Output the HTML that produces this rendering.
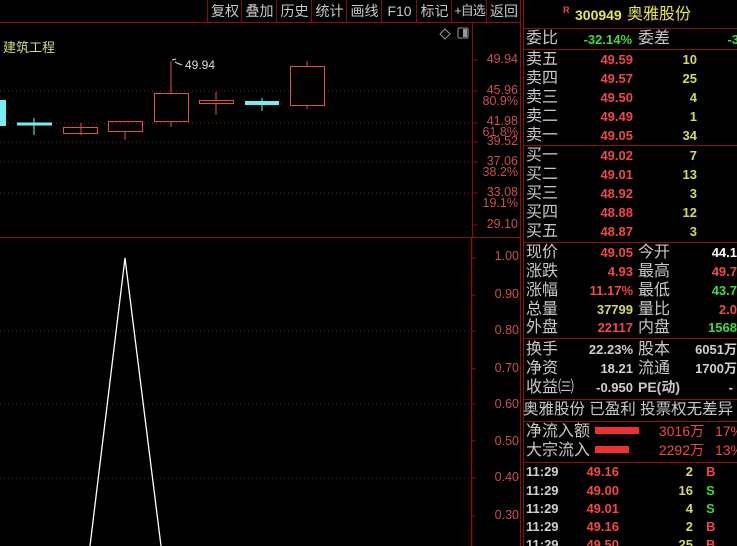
<!DOCTYPE html><html><head><meta charset="utf-8"><style>
body{margin:0;width:737px;height:546px;background:#000;overflow:hidden;position:relative;font-family:"Liberation Sans","Noto Sans CJK SC",sans-serif}
.a{position:absolute;white-space:nowrap}
.tb{position:absolute;top:0;height:22px;line-height:22px;font-size:14px;color:#c8c8c8;text-align:center;border-left:1px solid #7a1010;white-space:nowrap;overflow:hidden}
.ax{position:absolute;font-size:12.5px;color:#c85050;text-align:right}
.rp{position:absolute;left:523px;width:214px;font-size:16px;color:#c8c8c8;overflow:hidden}
.r{position:absolute;height:19px;line-height:19px;left:0;width:214px}
.r span{position:absolute;white-space:nowrap}
.n{font-weight:bold;font-size:13px;text-align:right}
.red{color:#f04848}.yel{color:#d8d860}.grn{color:#40d840}.wht{color:#fff}.gry{color:#d0d0d0}
.hl{position:absolute;left:0;width:214px;height:1px;background:#8a1010}
</style></head><body>
<div class="tb" style="left:207px;width:34px">复权</div>
<div class="tb" style="left:241px;width:35px">叠加</div>
<div class="tb" style="left:276px;width:35px">历史</div>
<div class="tb" style="left:311px;width:35px">统计</div>
<div class="tb" style="left:346px;width:35px">画线</div>
<div class="tb" style="left:381px;width:35px">F10</div>
<div class="tb" style="left:416px;width:35px">标记</div>
<div class="tb" style="left:451px;width:35px;font-size:13px;letter-spacing:-1px">+自选</div>
<div class="tb" style="left:486px;width:34px">返回</div>
<div class="a" style="left:0;top:22px;width:522px;height:1px;background:#8a1010"></div>
<div class="a" style="left:3px;top:37px;font-size:13px;color:#d8d890">建筑工程</div>
<svg class="a" style="left:0;top:0" width="522" height="546">
<g stroke="#6a2020" stroke-dasharray="1 3">
<line x1="0" y1="91" x2="472" y2="91"/><line x1="0" y1="123" x2="472" y2="123"/><line x1="0" y1="142" x2="472" y2="142"/><line x1="0" y1="162" x2="472" y2="162"/><line x1="0" y1="193" x2="472" y2="193"/>
<line x1="0" y1="331" x2="472" y2="331"/><line x1="0" y1="404" x2="472" y2="404"/><line x1="0" y1="478" x2="472" y2="478"/></g>
<line x1="472.5" y1="23" x2="472.5" y2="237" stroke="#8a1010"/>
<line x1="471.5" y1="238" x2="471.5" y2="546" stroke="#8a1010" stroke-width="1.5"/>
<line x1="0" y1="237.5" x2="522" y2="237.5" stroke="#8a1010"/>
<g stroke="#8a1010"><line x1="472" y1="60" x2="478" y2="60"/><line x1="472" y1="91" x2="478" y2="91"/><line x1="472" y1="123" x2="478" y2="123"/><line x1="472" y1="142" x2="478" y2="142"/><line x1="472" y1="162" x2="478" y2="162"/><line x1="472" y1="193" x2="478" y2="193"/><line x1="472" y1="225" x2="478" y2="225"/>
<line x1="471" y1="258" x2="476" y2="258"/><line x1="471" y1="295" x2="476" y2="295"/><line x1="471" y1="331" x2="476" y2="331"/><line x1="471" y1="369" x2="476" y2="369"/><line x1="471" y1="404" x2="476" y2="404"/><line x1="471" y1="441" x2="476" y2="441"/><line x1="471" y1="478" x2="476" y2="478"/><line x1="471" y1="516" x2="476" y2="516"/></g>
<path d="M440 34 L445 29 L450 34 L445 39Z" fill="none" stroke="#999"/>
<rect x="458" y="28" width="10" height="10" fill="none" stroke="#999" rx="1"/><rect x="463" y="29" width="4" height="8" fill="#999"/>
<rect x="0" y="100" width="6" height="26" fill="#70f0f0"/>
<g stroke="#70f0f0"><line x1="17" y1="124" x2="52" y2="124" stroke-width="3"/><line x1="34" y1="118" x2="34" y2="135"/><line x1="262" y1="98" x2="262" y2="111"/></g>
<rect x="245" y="101" width="34" height="4" fill="#70f0f0"/>
<g stroke="#e05050" fill="none">
<line x1="81" y1="123" x2="81" y2="135"/><rect x="63.5" y="127.5" width="34" height="6"/>
<line x1="125" y1="131" x2="125" y2="140"/><rect x="108.5" y="121.5" width="34" height="10"/>
<line x1="171" y1="61" x2="171" y2="127"/><rect x="154.5" y="93.5" width="34" height="28" fill="#000"/>
<line x1="216" y1="92" x2="216" y2="115"/><rect x="199.5" y="100.5" width="34" height="3" fill="#000"/>
<line x1="307" y1="61" x2="307" y2="109"/><rect x="290.5" y="66.5" width="34" height="39" fill="#000"/>
<path d="M172 60 L176 59 M175 62 L177 63 L182 65" stroke="#ddd"/></g>
<text x="185" y="69" fill="#ddd" font-size="12" font-family="Liberation Sans">49.94</text>
<polyline points="90,546 125,258 161,546" fill="none" stroke="#fff" stroke-width="1.3"/>
</svg>
<div class="ax" style="top:52px;right:219px">49.94</div>
<div class="ax" style="top:83px;right:219px">45.96</div>
<div class="ax" style="top:94px;right:219px">80.9%</div>
<div class="ax" style="top:114px;right:219px">41.98</div>
<div class="ax" style="top:125px;right:219px">61.8%</div>
<div class="ax" style="top:134px;right:219px">39.52</div>
<div class="ax" style="top:154px;right:219px">37.06</div>
<div class="ax" style="top:165px;right:219px">38.2%</div>
<div class="ax" style="top:185px;right:219px">33.08</div>
<div class="ax" style="top:196px;right:219px">19.1%</div>
<div class="ax" style="top:217px;right:219px">29.10</div>
<div class="ax" style="top:249px;right:218px">1.00</div>
<div class="ax" style="top:287px;right:218px">0.90</div>
<div class="ax" style="top:323px;right:218px">0.80</div>
<div class="ax" style="top:361px;right:218px">0.70</div>
<div class="ax" style="top:397px;right:218px">0.60</div>
<div class="ax" style="top:434px;right:218px">0.50</div>
<div class="ax" style="top:470px;right:218px">0.40</div>
<div class="ax" style="top:508px;right:218px">0.30</div>
<div class="a" style="left:520px;top:0;width:1px;height:546px;background:#8a1010"></div>
<div class="a" style="left:523px;top:0;width:1px;height:546px;background:#8a1010"></div>
<div class="rp" style="top:0;height:546px">
<div class="r" style="top:4px;height:22px;line-height:22px"><span style="left:40px;top:-5px;font-size:9px;color:#f04848;font-weight:bold">R</span><span style="left:52px;font-size:14px;font-weight:bold;color:#e8e840">300949</span><span style="left:104px;color:#e8e840">奥雅股份</span></div>
<div class="hl" style="top:28px"></div>
<div class="r" style="top:29px"><span style="left:3px">委比</span><span class="n grn" style="right:105px;top:1px">-32.14%</span><span style="left:115px">委差</span><span class="n grn" style="right:-2px;top:1px">-3</span></div>
<div class="hl" style="top:49px"></div>
<div class="r" style="top:50px"><span style="left:3px">卖五</span><span class="n red" style="right:104px">49.59</span><span class="n yel" style="right:40px">10</span></div>
<div class="r" style="top:69px"><span style="left:3px">卖四</span><span class="n red" style="right:104px">49.57</span><span class="n yel" style="right:40px">25</span></div>
<div class="r" style="top:88px"><span style="left:3px">卖三</span><span class="n red" style="right:104px">49.50</span><span class="n yel" style="right:40px">4</span></div>
<div class="r" style="top:107px"><span style="left:3px">卖二</span><span class="n red" style="right:104px">49.49</span><span class="n yel" style="right:40px">1</span></div>
<div class="r" style="top:126px"><span style="left:3px">卖一</span><span class="n red" style="right:104px">49.05</span><span class="n yel" style="right:40px">34</span></div>
<div class="hl" style="top:145px"></div>
<div class="r" style="top:146px"><span style="left:3px">买一</span><span class="n red" style="right:104px">49.02</span><span class="n yel" style="right:40px">7</span></div>
<div class="r" style="top:165px"><span style="left:3px">买二</span><span class="n red" style="right:104px">49.01</span><span class="n yel" style="right:40px">13</span></div>
<div class="r" style="top:184px"><span style="left:3px">买三</span><span class="n red" style="right:104px">48.92</span><span class="n yel" style="right:40px">3</span></div>
<div class="r" style="top:203px"><span style="left:3px">买四</span><span class="n red" style="right:104px">48.88</span><span class="n yel" style="right:40px">12</span></div>
<div class="r" style="top:222px"><span style="left:3px">买五</span><span class="n red" style="right:104px">48.87</span><span class="n yel" style="right:40px">3</span></div>
<div class="hl" style="top:242px"></div>
<div class="r" style="top:243px"><span style="left:3px">现价</span><span class="n red" style="right:104px">49.05</span><span style="left:115px">今开</span><span class="n wht" style="right:0">44.1</span></div>
<div class="r" style="top:262px"><span style="left:3px">涨跌</span><span class="n red" style="right:104px">4.93</span><span style="left:115px">最高</span><span class="n red" style="right:0">49.7</span></div>
<div class="r" style="top:281px"><span style="left:3px">涨幅</span><span class="n red" style="right:104px">11.17%</span><span style="left:115px">最低</span><span class="n grn" style="right:0">43.7</span></div>
<div class="r" style="top:300px"><span style="left:3px">总量</span><span class="n yel" style="right:104px">37799</span><span style="left:115px">量比</span><span class="n red" style="right:0">2.0</span></div>
<div class="r" style="top:318px"><span style="left:3px">外盘</span><span class="n red" style="right:104px">22117</span><span style="left:115px">内盘</span><span class="n grn" style="right:0">1568</span></div>
<div class="hl" style="top:338px"></div>
<div class="r" style="top:340px"><span style="left:3px">换手</span><span class="n gry" style="right:104px">22.23%</span><span style="left:115px">股本</span><span class="n gry" style="right:0">6051万</span></div>
<div class="r" style="top:359px"><span style="left:3px">净资</span><span class="n gry" style="right:104px">18.21</span><span style="left:115px">流通</span><span class="n gry" style="right:0">1700万</span></div>
<div class="r" style="top:378px"><span style="left:3px">收益㈢</span><span class="n gry" style="right:104px">-0.950</span><span style="left:115px;font-size:14px;font-weight:bold">PE(动)</span><span class="n gry" style="right:4px">-</span></div>
<div class="hl" style="top:399px"></div>
<div class="r" style="top:400px"><span style="left:0;font-size:15.5px">奥雅股份 已盈利 投票权无差异</span></div>
<div class="hl" style="top:421px"></div>
<div class="r" style="top:422px"><span style="left:3px">净流入额</span><span style="left:72px;top:5px;width:44px;height:7px;background:#f03030"></span><span class="red" style="right:33px;font-size:14px">3016万</span><span class="red" style="right:-6px;font-size:14px">17%</span></div>
<div class="r" style="top:441px"><span style="left:3px">大宗流入</span><span style="left:72px;top:5px;width:34px;height:7px;background:#f03030"></span><span class="red" style="right:33px;font-size:14px">2292万</span><span class="red" style="right:-6px;font-size:14px">13%</span></div>
<div class="hl" style="top:462px"></div>
<div class="r" style="top:462px"><span class="n gry" style="left:3px">11:29</span><span class="n red" style="right:118px">49.16</span><span class="n yel" style="right:44px">2</span><span class="n red" style="left:183px">B</span></div>
<div class="r" style="top:481px"><span class="n gry" style="left:3px">11:29</span><span class="n red" style="right:118px">49.00</span><span class="n yel" style="right:44px">16</span><span class="n grn" style="left:183px">S</span></div>
<div class="r" style="top:499px"><span class="n gry" style="left:3px">11:29</span><span class="n red" style="right:118px">49.01</span><span class="n yel" style="right:44px">4</span><span class="n grn" style="left:183px">S</span></div>
<div class="r" style="top:517px"><span class="n gry" style="left:3px">11:29</span><span class="n red" style="right:118px">49.16</span><span class="n yel" style="right:44px">2</span><span class="n red" style="left:183px">B</span></div>
<div class="r" style="top:535px"><span class="n gry" style="left:3px">11:29</span><span class="n red" style="right:118px">49.50</span><span class="n yel" style="right:44px">25</span><span class="n red" style="left:183px">B</span></div>
</div>
</body></html>
